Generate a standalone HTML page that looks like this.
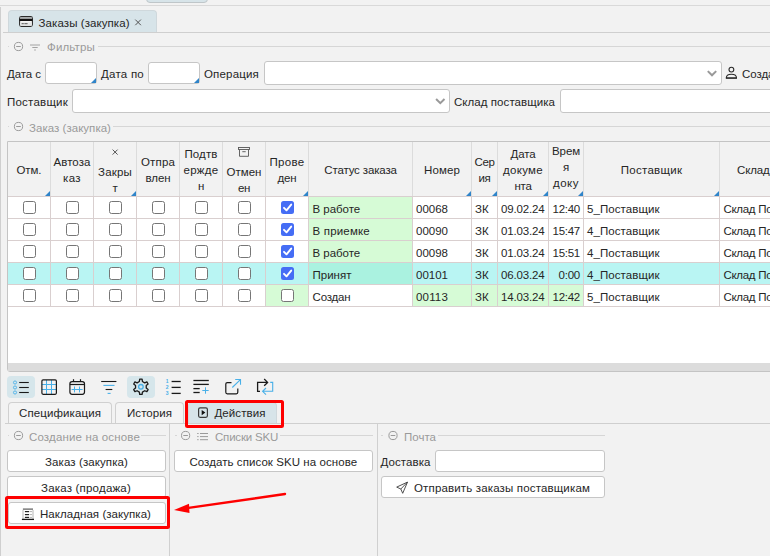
<!DOCTYPE html>
<html lang="ru"><head><meta charset="utf-8"><title>Заказы (закупка)</title>
<style>
html,body{margin:0;padding:0}
body{width:770px;height:556px;overflow:hidden;position:relative;background:#f2f2f2;font-family:"Liberation Sans",sans-serif;font-size:12px;color:#262626}
.t{position:absolute;white-space:nowrap;line-height:16px;height:16px}
.a{position:absolute}
.hl{position:absolute;height:1px;background:#d4d4d4}
.vl{position:absolute;width:1px;background:#d4d4d4}
.inp{position:absolute;background:#fff;border:1px solid #c6c6c6;border-radius:3px;box-sizing:border-box}
.btn{position:absolute;background:#fff;border:1px solid #c6c6c6;border-radius:3px;box-sizing:border-box}
.cb{position:absolute;width:13px;height:13px;box-sizing:border-box;border:1px solid #767676;border-radius:2.5px;background:#fff}
.cbc{position:absolute;width:13px;height:13px;border-radius:2.5px;background:#3b6cf0}
.tri{position:absolute;width:0;height:0;border-left:5px solid transparent;border-bottom:5px solid #2f84c9}
svg{position:absolute;overflow:visible}
</style></head><body>
<div class="hl" style="left:0;top:5px;width:770px;background:#d9d9d9"></div>
<div class="a" style="left:146px;top:-4px;width:62px;height:7px;background:#d7e4e9;border:1px solid #bfc6c9;border-radius:0 0 4px 4px;box-sizing:border-box"></div>
<div class="vl" style="left:0;top:7px;height:549px;background:#cfcfcf"></div>
<div class="a" style="left:8px;top:10px;width:149px;height:23px;background:#d7e4e9;border:1px solid #cfd8dc;border-bottom:none;border-radius:4px 4px 0 0;box-sizing:border-box"></div>
<div class="hl" style="left:3px;top:32px;width:767px;background:#cfcfcf"></div>
<span id="t0" class="t" style="left:38.6px;top:14.5px;color:#262626;font-size:11.5px;letter-spacing:0.076px">Заказы (закупка)</span>
<div class="hl" style="left:7.5px;top:46px;width:1.5px;background:#d6d6d6"></div>
<div class="hl" style="left:98px;top:46px;width:672px;background:#d6d6d6"></div>
<span id="t1" class="t" style="left:47px;top:39px;color:#9a9a9a;font-size:11.5px;letter-spacing:0.156px">Фильтры</span>
<span id="t2" class="t" style="left:7px;top:65.5px;color:#262626;font-size:11.5px;letter-spacing:-0.070px">Дата с</span>
<div class="inp" style="left:45px;top:62px;width:52px;height:22px"></div><div class="tri" style="left:91.3px;top:78.3px"></div>
<span id="t3" class="t" style="left:101px;top:65.5px;color:#262626;font-size:11.5px;letter-spacing:0.243px">Дата по</span>
<div class="inp" style="left:148px;top:62px;width:52px;height:22px"></div><div class="tri" style="left:194.3px;top:78.3px"></div>
<span id="t4" class="t" style="left:204px;top:65.5px;color:#262626;font-size:11.5px;letter-spacing:0.174px">Операция</span>
<div class="inp" style="left:264px;top:61px;width:458px;height:24px"></div>
<span id="t5" class="t" style="left:742px;top:65.5px;color:#262626;font-size:11.5px;letter-spacing:-0.050px">Создатель</span>
<span id="t6" class="t" style="left:7px;top:93.5px;color:#262626;font-size:11.5px;letter-spacing:0.224px">Поставщик</span>
<div class="inp" style="left:72px;top:89px;width:378px;height:24px"></div>
<span id="t7" class="t" style="left:454px;top:93.5px;color:#262626;font-size:11.5px;letter-spacing:0.059px">Склад поставщика</span>
<div class="inp" style="left:560px;top:89px;width:230px;height:24px"></div>
<div class="hl" style="left:7.5px;top:126px;width:1.5px;background:#d6d6d6"></div>
<div class="hl" style="left:113px;top:126px;width:657px;background:#d6d6d6"></div>
<span id="t8" class="t" style="left:29px;top:120px;color:#9a9a9a;font-size:11.5px;letter-spacing:0.032px">Заказ (закупка)</span>
<div class="a" style="left:7px;top:141px;width:766px;height:231px;background:#fff;border:1px solid #c4c4c4;box-sizing:border-box;border-radius:0 0 0 3px;overflow:hidden"></div>
<div class="a" style="left:8px;top:142px;width:762px;height:54px;background:#f2f2f2"></div>
<div class="a" style="left:8px;top:363px;width:762px;height:8px;background:#dcdcdc"></div>
<div class="a" style="left:8px;top:262px;width:762px;height:22px;background:#b9f5f3"></div>
<div class="a" style="left:308px;top:196px;width:104px;height:22px;background:#d6fbd6"></div>
<div class="a" style="left:308px;top:218px;width:104px;height:22px;background:#d6fbd6"></div>
<div class="a" style="left:308px;top:240px;width:104px;height:22px;background:#d6fbd6"></div>
<div class="a" style="left:308px;top:262px;width:104px;height:22px;background:#aaf2e0"></div>
<div class="a" style="left:265px;top:284px;width:43px;height:22px;background:#d6fbd6"></div>
<div class="a" style="left:412px;top:284px;width:171px;height:22px;background:#d6fbd6"></div>
<div class="hl" style="left:8px;top:196px;width:762px;background:#d9cfcf"></div>
<div class="hl" style="left:8px;top:218px;width:762px;background:#d9cfcf"></div>
<div class="hl" style="left:8px;top:240px;width:762px;background:#d9cfcf"></div>
<div class="hl" style="left:8px;top:262px;width:762px;background:#d9cfcf"></div>
<div class="hl" style="left:8px;top:284px;width:762px;background:#d9cfcf"></div>
<div class="hl" style="left:8px;top:306px;width:762px;background:#d9cfcf"></div>
<div class="vl" style="left:50px;top:142px;height:54px;background:#dcdcdc"></div>
<div class="vl" style="left:50px;top:196px;height:110px;background:#d9cfcf"></div>
<div class="vl" style="left:93px;top:142px;height:54px;background:#dcdcdc"></div>
<div class="vl" style="left:93px;top:196px;height:110px;background:#d9cfcf"></div>
<div class="vl" style="left:136px;top:142px;height:54px;background:#dcdcdc"></div>
<div class="vl" style="left:136px;top:196px;height:110px;background:#d9cfcf"></div>
<div class="vl" style="left:179px;top:142px;height:54px;background:#dcdcdc"></div>
<div class="vl" style="left:179px;top:196px;height:110px;background:#d9cfcf"></div>
<div class="vl" style="left:222px;top:142px;height:54px;background:#dcdcdc"></div>
<div class="vl" style="left:222px;top:196px;height:110px;background:#d9cfcf"></div>
<div class="vl" style="left:265px;top:142px;height:54px;background:#dcdcdc"></div>
<div class="vl" style="left:265px;top:196px;height:110px;background:#d9cfcf"></div>
<div class="vl" style="left:308px;top:142px;height:54px;background:#dcdcdc"></div>
<div class="vl" style="left:308px;top:196px;height:110px;background:#d9cfcf"></div>
<div class="vl" style="left:412px;top:142px;height:54px;background:#dcdcdc"></div>
<div class="vl" style="left:412px;top:196px;height:110px;background:#d9cfcf"></div>
<div class="vl" style="left:471px;top:142px;height:54px;background:#dcdcdc"></div>
<div class="vl" style="left:471px;top:196px;height:110px;background:#d9cfcf"></div>
<div class="vl" style="left:497px;top:142px;height:54px;background:#dcdcdc"></div>
<div class="vl" style="left:497px;top:196px;height:110px;background:#d9cfcf"></div>
<div class="vl" style="left:548px;top:142px;height:54px;background:#dcdcdc"></div>
<div class="vl" style="left:548px;top:196px;height:110px;background:#d9cfcf"></div>
<div class="vl" style="left:583px;top:142px;height:54px;background:#dcdcdc"></div>
<div class="vl" style="left:583px;top:196px;height:110px;background:#d9cfcf"></div>
<div class="vl" style="left:719px;top:142px;height:54px;background:#dcdcdc"></div>
<div class="vl" style="left:719px;top:196px;height:110px;background:#d9cfcf"></div>
<div class="tri" style="left:45px;top:191px"></div>
<div class="tri" style="left:131px;top:191px"></div>
<div class="tri" style="left:303px;top:191px"></div>
<div class="tri" style="left:466px;top:191px"></div>
<div class="tri" style="left:492px;top:191px"></div>
<div class="tri" style="left:543px;top:191px"></div>
<div class="tri" style="left:578px;top:191px"></div>
<div class="tri" style="left:714px;top:191px"></div>
<span id="t9" class="t" style="left:16.5px;top:162px;color:#262626;font-size:11.5px;letter-spacing:-0.082px">Отм.</span>
<span id="t10" class="t" style="left:53.5px;top:154px;color:#262626;font-size:11.5px;letter-spacing:0.065px">Автоза</span>
<span id="t11" class="t" style="left:63px;top:170px;color:#262626;font-size:11.5px;letter-spacing:0.391px">каз</span>
<span id="t12" class="t" style="left:98px;top:164px;color:#262626;font-size:11.5px;letter-spacing:0.191px">Закры</span>
<span id="t13" class="t" style="left:112.5px;top:180px;color:#262626;font-size:11.5px;letter-spacing:-0.281px">т</span>
<span id="t14" class="t" style="left:141px;top:154px;color:#262626;font-size:11.5px;letter-spacing:0.153px">Отпра</span>
<span id="t15" class="t" style="left:145.5px;top:170px;color:#262626;font-size:11.5px;letter-spacing:-0.078px">влен</span>
<span id="t16" class="t" style="left:184.5px;top:146px;color:#262626;font-size:11.5px;letter-spacing:0.100px">Подтв</span>
<span id="t17" class="t" style="left:183.5px;top:162px;color:#262626;font-size:11.5px;letter-spacing:0.281px">ержде</span>
<span id="t18" class="t" style="left:198px;top:178px;color:#262626;font-size:11.5px;letter-spacing:-0.359px">н</span>
<span id="t19" class="t" style="left:226.5px;top:164px;color:#262626;font-size:11.5px;letter-spacing:0.025px">Отмен</span>
<span id="t20" class="t" style="left:238px;top:180px;color:#262626;font-size:11.5px;letter-spacing:-0.375px">ен</span>
<span id="t21" class="t" style="left:269.5px;top:154px;color:#262626;font-size:11.5px;letter-spacing:0.312px">Прове</span>
<span id="t22" class="t" style="left:277.5px;top:170px;color:#262626;font-size:11.5px;letter-spacing:-0.156px">ден</span>
<span id="t23" class="t" style="left:324.25px;top:162px;color:#262626;font-size:11.5px;letter-spacing:-0.149px">Статус заказа</span>
<span id="t24" class="t" style="left:424px;top:162px;color:#262626;font-size:11.5px;letter-spacing:0.119px">Номер</span>
<span id="t25" class="t" style="left:474.5px;top:154px;color:#262626;font-size:11.5px;letter-spacing:-0.370px">Сер</span>
<span id="t26" class="t" style="left:478.5px;top:170px;color:#262626;font-size:11.5px;letter-spacing:-0.328px">ия</span>
<span id="t27" class="t" style="left:510.5px;top:146px;color:#262626;font-size:11.5px;letter-spacing:-0.117px">Дата</span>
<span id="t28" class="t" style="left:503px;top:162px;color:#262626;font-size:11.5px;letter-spacing:0.299px">докуме</span>
<span id="t29" class="t" style="left:514.5px;top:178px;color:#262626;font-size:11.5px;letter-spacing:-0.297px">нта</span>
<span id="t30" class="t" style="left:552px;top:143px;color:#262626;font-size:11.5px;letter-spacing:-0.094px">Врем</span>
<span id="t31" class="t" style="left:563px;top:159px;color:#262626;font-size:11.5px;letter-spacing:-0.234px">я</span>
<span id="t32" class="t" style="left:553px;top:175px;color:#262626;font-size:11.5px;letter-spacing:0.492px">доку</span>
<span id="t33" class="t" style="left:620.75px;top:162px;color:#262626;font-size:11.5px;letter-spacing:0.280px">Поставщик</span>
<span id="t34" class="t" style="left:737px;top:162px;color:#262626;font-size:11.5px;letter-spacing:-0.159px">Склад</span>
<div class="cb" style="left:23px;top:201px"></div>
<div class="cb" style="left:66px;top:201px"></div>
<div class="cb" style="left:109px;top:201px"></div>
<div class="cb" style="left:152px;top:201px"></div>
<div class="cb" style="left:195px;top:201px"></div>
<div class="cb" style="left:238px;top:201px"></div>
<span id="t35" class="t" style="left:312.5px;top:200.5px;color:#262626;font-size:11.5px;letter-spacing:-0.040px">В работе</span>
<span id="t36" class="t" style="left:416px;top:200.5px;color:#262626;font-size:11.5px;letter-spacing:0.003px">00068</span>
<span id="t37" class="t" style="left:475px;top:200.5px;color:#262626;font-size:11.5px;letter-spacing:0.172px">ЗК</span>
<span id="t38" class="t" style="left:501px;top:200.5px;color:#262626;font-size:11.5px;letter-spacing:-0.158px">09.02.24</span>
<span id="t39" class="t" style="left:552.5px;top:200.5px;color:#262626;font-size:11.5px;letter-spacing:-0.256px">12:40</span>
<span id="t40" class="t" style="left:587px;top:200.5px;color:#262626;font-size:11.5px;letter-spacing:0.067px">5_Поставщик</span>
<span id="t41" class="t" style="left:723.5px;top:200.5px;color:#262626;font-size:11.5px;letter-spacing:-0.300px">Склад Поставщика</span>
<div class="cb" style="left:23px;top:223px"></div>
<div class="cb" style="left:66px;top:223px"></div>
<div class="cb" style="left:109px;top:223px"></div>
<div class="cb" style="left:152px;top:223px"></div>
<div class="cb" style="left:195px;top:223px"></div>
<div class="cb" style="left:238px;top:223px"></div>
<span id="t42" class="t" style="left:312.5px;top:222.5px;color:#262626;font-size:11.5px;letter-spacing:0.180px">В приемке</span>
<span id="t43" class="t" style="left:416px;top:222.5px;color:#262626;font-size:11.5px;letter-spacing:0.003px">00090</span>
<span id="t44" class="t" style="left:475px;top:222.5px;color:#262626;font-size:11.5px;letter-spacing:0.172px">ЗК</span>
<span id="t45" class="t" style="left:501px;top:222.5px;color:#262626;font-size:11.5px;letter-spacing:-0.158px">01.03.24</span>
<span id="t46" class="t" style="left:552.5px;top:222.5px;color:#262626;font-size:11.5px;letter-spacing:-0.256px">15:47</span>
<span id="t47" class="t" style="left:587px;top:222.5px;color:#262626;font-size:11.5px;letter-spacing:0.067px">4_Поставщик</span>
<span id="t48" class="t" style="left:723.5px;top:222.5px;color:#262626;font-size:11.5px;letter-spacing:-0.300px">Склад Поставщика</span>
<div class="cb" style="left:23px;top:245px"></div>
<div class="cb" style="left:66px;top:245px"></div>
<div class="cb" style="left:109px;top:245px"></div>
<div class="cb" style="left:152px;top:245px"></div>
<div class="cb" style="left:195px;top:245px"></div>
<div class="cb" style="left:238px;top:245px"></div>
<span id="t49" class="t" style="left:312.5px;top:244.5px;color:#262626;font-size:11.5px;letter-spacing:-0.040px">В работе</span>
<span id="t50" class="t" style="left:416px;top:244.5px;color:#262626;font-size:11.5px;letter-spacing:0.003px">00098</span>
<span id="t51" class="t" style="left:475px;top:244.5px;color:#262626;font-size:11.5px;letter-spacing:0.172px">ЗК</span>
<span id="t52" class="t" style="left:501px;top:244.5px;color:#262626;font-size:11.5px;letter-spacing:-0.158px">01.03.24</span>
<span id="t53" class="t" style="left:552.5px;top:244.5px;color:#262626;font-size:11.5px;letter-spacing:-0.256px">15:51</span>
<span id="t54" class="t" style="left:587px;top:244.5px;color:#262626;font-size:11.5px;letter-spacing:0.067px">4_Поставщик</span>
<span id="t55" class="t" style="left:723.5px;top:244.5px;color:#262626;font-size:11.5px;letter-spacing:-0.300px">Склад Поставщика</span>
<div class="cb" style="left:23px;top:267px"></div>
<div class="cb" style="left:66px;top:267px"></div>
<div class="cb" style="left:109px;top:267px"></div>
<div class="cb" style="left:152px;top:267px"></div>
<div class="cb" style="left:195px;top:267px"></div>
<div class="cb" style="left:238px;top:267px"></div>
<span id="t56" class="t" style="left:312.5px;top:266.5px;color:#262626;font-size:11.5px;letter-spacing:0.010px">Принят</span>
<span id="t57" class="t" style="left:416px;top:266.5px;color:#262626;font-size:11.5px;letter-spacing:0.003px">00101</span>
<span id="t58" class="t" style="left:475px;top:266.5px;color:#262626;font-size:11.5px;letter-spacing:0.172px">ЗК</span>
<span id="t59" class="t" style="left:501px;top:266.5px;color:#262626;font-size:11.5px;letter-spacing:-0.158px">06.03.24</span>
<span id="t60" class="t" style="left:558.5px;top:266.5px;color:#262626;font-size:11.5px;letter-spacing:-0.223px">0:00</span>
<span id="t61" class="t" style="left:587px;top:266.5px;color:#262626;font-size:11.5px;letter-spacing:0.067px">4_Поставщик</span>
<span id="t62" class="t" style="left:723.5px;top:266.5px;color:#262626;font-size:11.5px;letter-spacing:-0.300px">Склад Поставщика</span>
<div class="cb" style="left:23px;top:289px"></div>
<div class="cb" style="left:66px;top:289px"></div>
<div class="cb" style="left:109px;top:289px"></div>
<div class="cb" style="left:152px;top:289px"></div>
<div class="cb" style="left:195px;top:289px"></div>
<div class="cb" style="left:238px;top:289px"></div>
<div class="cb" style="left:281px;top:289px"></div>
<span id="t63" class="t" style="left:312.5px;top:288.5px;color:#262626;font-size:11.5px;letter-spacing:-0.177px">Создан</span>
<span id="t64" class="t" style="left:416px;top:288.5px;color:#262626;font-size:11.5px;letter-spacing:0.172px">00113</span>
<span id="t65" class="t" style="left:475px;top:288.5px;color:#262626;font-size:11.5px;letter-spacing:0.172px">ЗК</span>
<span id="t66" class="t" style="left:501px;top:288.5px;color:#262626;font-size:11.5px;letter-spacing:-0.158px">14.03.24</span>
<span id="t67" class="t" style="left:552.5px;top:288.5px;color:#262626;font-size:11.5px;letter-spacing:-0.256px">12:42</span>
<span id="t68" class="t" style="left:587px;top:288.5px;color:#262626;font-size:11.5px;letter-spacing:0.067px">5_Поставщик</span>
<span id="t69" class="t" style="left:723.5px;top:288.5px;color:#262626;font-size:11.5px;letter-spacing:-0.300px">Склад Поставщика</span>
<div class="a" style="left:7px;top:376px;width:28px;height:22px;background:#d6e6eb;border-radius:4px"></div>
<div class="a" style="left:127px;top:376px;width:28px;height:22px;background:#d6e6eb;border-radius:4px"></div>
<div class="a" style="left:8px;top:402px;width:104px;height:22px;background:#f4f4f4;border:1px solid #d0d0d0;border-bottom:none;border-radius:4px 4px 0 0;box-sizing:border-box"></div>
<div class="a" style="left:115px;top:402px;width:69px;height:22px;background:#f4f4f4;border:1px solid #d0d0d0;border-bottom:none;border-radius:4px 4px 0 0;box-sizing:border-box"></div>
<div class="a" style="left:188px;top:402px;width:89px;height:22px;background:#d7e4e9;border:1px solid #cfd8dc;border-bottom:none;border-radius:4px 4px 0 0;box-sizing:border-box"></div>
<div class="hl" style="left:5px;top:423px;width:765px;background:#cfcfcf"></div>
<span id="t70" class="t" style="left:19px;top:405px;color:#262626;font-size:11.5px;letter-spacing:0.104px">Спецификация</span>
<span id="t71" class="t" style="left:127px;top:405px;color:#262626;font-size:11.5px;letter-spacing:0.056px">История</span>
<span id="t72" class="t" style="left:214.5px;top:405px;color:#262626;font-size:11.5px;letter-spacing:0.076px">Действия</span>
<div class="a" style="left:185px;top:400px;width:99px;height:28px;border:3px solid #fe0000;box-sizing:border-box;border-radius:2.5px"></div>
<div class="vl" style="left:169px;top:424px;height:132px;background:#d0d0d0"></div>
<div class="vl" style="left:376.5px;top:424px;height:132px;background:#d0d0d0"></div>
<div class="hl" style="left:7.5px;top:435px;width:1.5px;background:#d6d6d6"></div>
<div class="hl" style="left:141px;top:435px;width:25px;background:#d6d6d6"></div>
<span id="t73" class="t" style="left:29px;top:429px;color:#9a9a9a;font-size:11.5px;letter-spacing:0.151px">Создание на основе</span>
<div class="btn" style="left:7px;top:450px;width:159px;height:22px"></div>
<span id="t74" class="t" style="left:45px;top:453.5px;color:#262626;font-size:11.5px;letter-spacing:0.099px">Заказ (закупка)</span>
<div class="btn" style="left:7px;top:476px;width:159px;height:22px"></div>
<span id="t75" class="t" style="left:41px;top:479.5px;color:#262626;font-size:11.5px;letter-spacing:0.201px">Заказ (продажа)</span>
<div class="btn" style="left:7.5px;top:502px;width:158.5px;height:22px"></div>
<span id="t76" class="t" style="left:40px;top:505.5px;color:#262626;font-size:11.5px;letter-spacing:0.053px">Накладная (закупка)</span>
<div class="a" style="left:5px;top:496px;width:165px;height:33px;border:3px solid #fe0000;box-sizing:border-box;border-radius:2.5px"></div>
<div class="hl" style="left:175px;top:435px;width:1.5px;background:#d6d6d6"></div>
<div class="hl" style="left:280px;top:435px;width:93px;background:#d6d6d6"></div>
<span id="t77" class="t" style="left:215px;top:429px;color:#9a9a9a;font-size:11.5px;letter-spacing:-0.202px">Списки SKU</span>
<div class="btn" style="left:174px;top:450px;width:199px;height:22px"></div>
<span id="t78" class="t" style="left:189.4px;top:453.5px;color:#262626;font-size:11.5px;letter-spacing:0.069px">Создать список SKU на основе</span>
<div class="hl" style="left:381px;top:435px;width:1.5px;background:#d6d6d6"></div>
<div class="hl" style="left:438px;top:435px;width:167px;background:#d6d6d6"></div>
<span id="t79" class="t" style="left:404px;top:429px;color:#9a9a9a;font-size:11.5px;letter-spacing:0.013px">Почта</span>
<span id="t80" class="t" style="left:380.5px;top:453.5px;color:#262626;font-size:11.5px;letter-spacing:0.076px">Доставка</span>
<div class="inp" style="left:435px;top:450px;width:170px;height:22px"></div>
<div class="btn" style="left:381px;top:476px;width:224px;height:22px"></div>
<span id="t81" class="t" style="left:414px;top:479.5px;color:#262626;font-size:11.5px;letter-spacing:0.155px">Отправить заказы поставщикам</span>
<svg style="left:0;top:0" width="770" height="556" viewBox="0 0 770 556">
<g transform="translate(19,16)"><rect x="0.6" y="0.6" width="12.8" height="9.8" rx="1.8" fill="#f4f4f4" stroke="#2a2a2a" stroke-width="1.1"/><rect x="1.1" y="1.1" width="11.8" height="1.6" rx="0.8" fill="#a9adaf"/><rect x="0.6" y="2.8" width="12.8" height="2.2" fill="#111"/><rect x="1.2" y="6.4" width="11.6" height="3.4" fill="#e4e6e7"/><rect x="2.6" y="7.1" width="2.2" height="1.1" fill="#666"/><rect x="5.4" y="7.1" width="3.2" height="1.1" fill="#666"/></g>
<g transform="translate(135,19.3)"><path d="M0.3 0.3 L5.9 5.9 M5.9 0.3 L0.3 5.9" stroke="#444" stroke-width="0.9" fill="none"/></g>
<g transform="translate(12,40)"><circle cx="6.5" cy="6.5" r="4.1" fill="none" stroke="#9a9a9a" stroke-width="1"/><line x1="4.2" y1="6.5" x2="8.8" y2="6.5" stroke="#9a9a9a" stroke-width="1"/></g>
<g transform="translate(30,44)"><g stroke="#9a9a9a" stroke-width="0.9" fill="none"><line x1="0" y1="1" x2="10" y2="1"/><line x1="2.3" y1="3.5" x2="7.7" y2="3.5"/><line x1="4.2" y1="6" x2="5.8" y2="6"/></g></g>
<g transform="translate(707,70.3)"><polyline points="0.8,0.8 5,5 9.2,0.8" fill="none" stroke="#999" stroke-width="2"/></g>
<g transform="translate(0,0)" fill="none"><circle cx="731.4" cy="69.6" r="2.4" stroke="#2a2a2a" stroke-width="1.1"/><path d="M726.3 78 Q726.3 74.2 731.4 74.2 Q736.5 74.2 736.5 78 Z" stroke="#2a2a2a" stroke-width="1.1" stroke-linejoin="round"/><line x1="725.9" y1="78.1" x2="736.9" y2="78.1" stroke="#2a2a2a" stroke-width="1.3"/></g>
<g transform="translate(435.3,98.2)"><polyline points="0.8,0.8 5,5 9.2,0.8" fill="none" stroke="#999" stroke-width="2"/></g>
<g transform="translate(12,120)"><circle cx="6.5" cy="6.5" r="4.1" fill="none" stroke="#9a9a9a" stroke-width="1"/><line x1="4.2" y1="6.5" x2="8.8" y2="6.5" stroke="#9a9a9a" stroke-width="1"/></g>
<g transform="translate(112.3,149.3)"><path d="M0.3 0.3 L5.3 5.3 M5.3 0.3 L0.3 5.3" stroke="#444" stroke-width="0.9" fill="none"/></g>
<g transform="translate(238,147)"><g fill="none" stroke="#555" stroke-width="0.9"><rect x="0.5" y="0.5" width="11" height="2"/><path d="M1.5 2.6 V9.3 H10.5 V2.6"/><line x1="4.3" y1="4.7" x2="7.7" y2="4.7"/></g></g>
<g transform="translate(281,201)"><rect width="13" height="13" rx="2.5" fill="#456df5"/><polyline points="3,6.8 5.5,9.3 10.2,3.6" fill="none" stroke="#fff" stroke-width="1.9" stroke-linecap="round" stroke-linejoin="round"/></g>
<g transform="translate(281,223)"><rect width="13" height="13" rx="2.5" fill="#456df5"/><polyline points="3,6.8 5.5,9.3 10.2,3.6" fill="none" stroke="#fff" stroke-width="1.9" stroke-linecap="round" stroke-linejoin="round"/></g>
<g transform="translate(281,245)"><rect width="13" height="13" rx="2.5" fill="#456df5"/><polyline points="3,6.8 5.5,9.3 10.2,3.6" fill="none" stroke="#fff" stroke-width="1.9" stroke-linecap="round" stroke-linejoin="round"/></g>
<g transform="translate(281,267)"><rect width="13" height="13" rx="2.5" fill="#456df5"/><polyline points="3,6.8 5.5,9.3 10.2,3.6" fill="none" stroke="#fff" stroke-width="1.9" stroke-linecap="round" stroke-linejoin="round"/></g>
<g transform="translate(0,0)" fill="none">
<g stroke="#49b0e8" stroke-width="0.9"><circle cx="15" cy="382.5" r="1.55"/><circle cx="15" cy="387.5" r="1.55"/><circle cx="15" cy="392.5" r="1.55"/></g>
<g stroke="#1a1a1a" stroke-width="1.1"><line x1="19.2" y1="382.5" x2="28.8" y2="382.5"/><line x1="19.2" y1="387.5" x2="28.8" y2="387.5"/><line x1="19.2" y1="392.5" x2="28.8" y2="392.5"/></g>
<g stroke="#49b0e8" stroke-width="1"><line x1="46.5" y1="380" x2="46.5" y2="394.2"/><line x1="51.5" y1="380" x2="51.5" y2="394.2"/><line x1="41.9" y1="384.5" x2="56.4" y2="384.5"/><line x1="41.9" y1="389.5" x2="56.4" y2="389.5"/></g>
<rect x="41.9" y="379.9" width="14.5" height="14.4" rx="1.2" stroke="#1a1a1a" stroke-width="1.2"/>
<g stroke="#1a1a1a" stroke-width="1.2"><rect x="69.9" y="381.6" width="14.6" height="12.7" rx="2.2"/><line x1="69.9" y1="384.5" x2="84.5" y2="384.5"/><line x1="73.5" y1="379.2" x2="73.5" y2="381.6"/><line x1="80.5" y1="379.2" x2="80.5" y2="381.6"/></g>
<g stroke="#49b0e8" stroke-width="1"><line x1="71.6" y1="389.5" x2="82.6" y2="389.5"/><line x1="74.5" y1="386.5" x2="74.5" y2="392.4"/><line x1="79.5" y1="386.5" x2="79.5" y2="392.4"/></g>
<g stroke-width="1.1"><line x1="101.2" y1="381.5" x2="116.4" y2="381.5" stroke="#1a1a1a"/><line x1="103.4" y1="385.4" x2="114.5" y2="385.4" stroke="#49b0e8"/><line x1="105.6" y1="389.5" x2="112.3" y2="389.5" stroke="#1a1a1a"/><line x1="107.6" y1="393.4" x2="110.6" y2="393.4" stroke="#49b0e8"/></g>
<circle cx="140.9" cy="386.8" r="2.3" stroke="#49b0e8" stroke-width="1.3"/>
<path d="M139.37 381.52 L139.70 379.19 L142.10 379.19 L142.43 381.52 L144.71 382.83 L146.88 381.95 L148.09 384.04 L146.24 385.49 L146.24 388.11 L148.09 389.56 L146.88 391.65 L144.71 390.77 L142.43 392.08 L142.10 394.41 L139.70 394.41 L139.37 392.08 L137.09 390.77 L134.92 391.65 L133.71 389.56 L135.56 388.11 L135.56 385.49 L133.71 384.04 L134.92 381.95 L137.09 382.83 Z" stroke="#1a1a1a" stroke-width="1.3" stroke-linejoin="round"/>
<g stroke="#1a1a1a" stroke-width="1.3"><line x1="171.6" y1="381.5" x2="180.7" y2="381.5"/><line x1="171.6" y1="387.4" x2="180.7" y2="387.4"/><line x1="171.6" y1="393.4" x2="180.7" y2="393.4"/></g>
<g fill="#49b0e8" stroke="none" font-family="Liberation Sans, sans-serif" font-size="5" font-weight="bold"><text x="165.8" y="383.3">1</text><text x="165.8" y="389.2">2</text><text x="165.8" y="395.2">3</text></g>
<g stroke="#1a1a1a" stroke-width="1.3"><line x1="193.4" y1="380.5" x2="208.8" y2="380.5"/><line x1="193.4" y1="384.4" x2="208.8" y2="384.4"/><line x1="193.4" y1="388.6" x2="199.7" y2="388.6"/><line x1="193.4" y1="392.5" x2="199.7" y2="392.5"/></g>
<g stroke="#49b0e8" stroke-width="1"><line x1="202.3" y1="390.5" x2="208.7" y2="390.5"/><line x1="205.5" y1="387.3" x2="205.5" y2="393.7"/></g>
<path d="M231.5 382.6 H227.3 Q225.8 382.6 225.8 384.1 V392.3 Q225.8 393.8 227.3 393.8 H236.3 Q237.8 393.8 237.8 392.3 V388.5" stroke="#1a1a1a" stroke-width="1.2"/>
<path d="M232.3 387.5 L240.4 379.6 M235.2 379.5 H240.5 V384.8" stroke="#49b0e8" stroke-width="1.1"/>
<path d="M260 391.4 H257.6 V382.4 H267.4 M264.2 379 L267.6 382.4 L264.2 385.8" stroke="#1a1a1a" stroke-width="1.3"/>
<path d="M270.2 382.4 H272.7 V391.3 H262.8 M266 388 L262.6 391.3 L266 394.6" stroke="#49b0e8" stroke-width="1.1"/>
</g>
<g transform="translate(198,407.3)"><rect x="0.6" y="0.6" width="8.8" height="9.4" rx="1.5" fill="none" stroke="#3a3a3a" stroke-width="1.2"/><path d="M3.7 2.7 L7.4 5.3 L3.7 7.9 Z" fill="#111"/></g>
<g transform="translate(12,429)"><circle cx="6.5" cy="6.5" r="4.1" fill="none" stroke="#9a9a9a" stroke-width="1"/><line x1="4.2" y1="6.5" x2="8.8" y2="6.5" stroke="#9a9a9a" stroke-width="1"/></g>
<g transform="translate(0,0)" fill="none"><rect x="22.9" y="508.3" width="10.1" height="1.7" fill="#8a8a8a"/><line x1="23" y1="510" x2="23" y2="519" stroke="#b5b5b5" stroke-width="1"/><line x1="33" y1="510" x2="33" y2="519" stroke="#b5b5b5" stroke-width="1"/><g stroke="#222" stroke-width="1.2"><line x1="24.9" y1="511.6" x2="29.1" y2="511.6"/><line x1="24.9" y1="514.6" x2="29.1" y2="514.6"/><line x1="24.9" y1="517.4" x2="29.1" y2="517.4"/></g><g stroke="#aaa" stroke-width="0.9"><line x1="29.8" y1="511.6" x2="32" y2="511.6"/><line x1="29.8" y1="514.6" x2="32" y2="514.6"/><line x1="29.8" y1="517.4" x2="32" y2="517.4"/></g><line x1="21.9" y1="519.4" x2="34" y2="519.4" stroke="#1a1a1a" stroke-width="1.3"/></g>
<g transform="translate(0,0)"><line x1="285" y1="494" x2="185" y2="508.4" stroke="#fe0000" stroke-width="2.4" stroke-linecap="round"/><polygon points="174,510 189,503.8 189.5,513" fill="#fe0000"/></g>
<g transform="translate(179,429)"><circle cx="6.6" cy="6.5" r="4.1" fill="none" stroke="#9a9a9a" stroke-width="1"/><line x1="4.3" y1="6.5" x2="8.9" y2="6.5" stroke="#9a9a9a" stroke-width="1"/></g>
<g transform="translate(197,432)"><g stroke="#9a9a9a" stroke-width="1" fill="none"><line x1="3" y1="1.5" x2="11" y2="1.5"/><line x1="3" y1="4.6" x2="11" y2="4.6"/><line x1="3" y1="7.7" x2="11" y2="7.7"/><line x1="0.2" y1="1.5" x2="1.6" y2="1.5"/><line x1="0.2" y1="4.6" x2="1.6" y2="4.6"/><line x1="0.2" y1="7.7" x2="1.6" y2="7.7"/></g></g>
<g transform="translate(387,429)"><circle cx="6" cy="6.5" r="4.1" fill="none" stroke="#9a9a9a" stroke-width="1"/><line x1="3.7" y1="6.5" x2="8.3" y2="6.5" stroke="#9a9a9a" stroke-width="1"/></g>
<g transform="translate(396,481.5)"><path d="M11.5 0.6 L0.7 5.6 L4.8 7.5 L6.7 11.8 Z M4.8 7.5 L11.5 0.6" fill="none" stroke="#3c3c3c" stroke-width="0.9" stroke-linejoin="round"/></g>
</svg>
</body></html>
